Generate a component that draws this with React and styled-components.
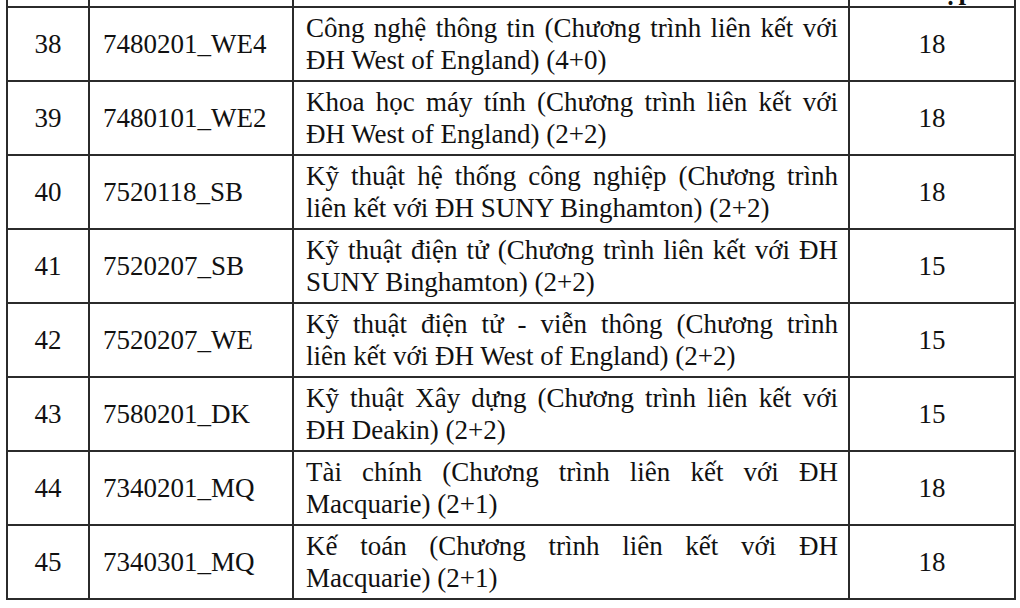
import React from "react";
import styled, { createGlobalStyle } from "styled-components";

const Global = createGlobalStyle`
  html, body { margin: 0; padding: 0; background: #ffffff; }
  body { font-family: "Liberation Serif", "Times New Roman", serif; color: #111111; overflow: hidden; }
`;

const Page = styled.div`
  width: 1020px;
  height: 608px;
  overflow: hidden;
  padding-left: 6px;
  box-sizing: border-box;
`;

const Table = styled.table`
  border-collapse: collapse;
  table-layout: fixed;
  width: 1010px;
  font-size: 27px;
  line-height: 32px;
`;

const Col = styled.col`
  width: ${(p) => p.$w}px;
`;

const HeadCell = styled.th`
  border-left: 2px solid #2b2b2b;
  border-right: 2px solid #2b2b2b;
  border-bottom: 2px solid #2b2b2b;
  padding: 0;
  height: 6px;
  font-weight: bold;
`;

const HeadClip = styled.div`
  height: 6px;
  overflow: hidden;
  display: flex;
  align-items: flex-end;
  justify-content: center;
  line-height: 32px;
`;

const Cell = styled.td`
  border: 2px solid #2b2b2b;
  padding: ${(p) => p.$pad || "4px"};
  text-align: ${(p) => p.$align || "center"};
  vertical-align: middle;
  white-space: nowrap;
`;

const Line = styled.div`
  text-align: ${(p) => (p.$justify ? "justify" : "left")};
  text-align-last: ${(p) => (p.$justify ? "justify" : "left")};
  white-space: normal;
`;

const rows = [
  ["38", "7480201_WE4", ["Công nghệ thông tin (Chương trình liên kết với", "ĐH West of England) (4+0)"], "18"],
  ["39", "7480101_WE2", ["Khoa học máy tính (Chương trình liên kết với", "ĐH West of England) (2+2)"], "18"],
  ["40", "7520118_SB", ["Kỹ thuật hệ thống công nghiệp (Chương trình", "liên kết với ĐH SUNY Binghamton) (2+2)"], "18"],
  ["41", "7520207_SB", ["Kỹ thuật điện tử (Chương trình liên kết với ĐH", "SUNY Binghamton) (2+2)"], "15"],
  ["42", "7520207_WE", ["Kỹ thuật điện tử - viễn thông (Chương trình", "liên kết với ĐH West of England) (2+2)"], "15"],
  ["43", "7580201_DK", ["Kỹ thuật Xây dựng (Chương trình liên kết với", "ĐH Deakin) (2+2)"], "15"],
  ["44", "7340201_MQ", ["Tài chính (Chương trình liên kết với ĐH", "Macquarie) (2+1)"], "18"],
  ["45", "7340301_MQ", ["Kế toán (Chương trình liên kết với ĐH", "Macquarie) (2+1)"], "18"],
];

export default function App() {
  return (
    <Page>
      <Global />
      <Table>
        <colgroup>
          <Col $w={82} />
          <Col $w={204} />
          <Col $w={556} />
          <Col $w={166} />
        </colgroup>
        <thead>
          <tr>
            <HeadCell />
            <HeadCell />
            <HeadCell />
            <HeadCell><HeadClip>Tổ hợp</HeadClip></HeadCell>
          </tr>
        </thead>
        <tbody>
          {rows.map(([no, code, desc, score]) => (
            <tr key={no}>
              <Cell>{no}</Cell>
              <Cell $align="left" $pad="4px 4px 4px 13px">{code}</Cell>
              <Cell $align="left" $pad="4px 10px 4px 12px">
                <Line $justify>{desc[0]}</Line>
                <Line>{desc[1]}</Line>
              </Cell>
              <Cell>{score}</Cell>
            </tr>
          ))}
        </tbody>
      </Table>
    </Page>
  );
}
